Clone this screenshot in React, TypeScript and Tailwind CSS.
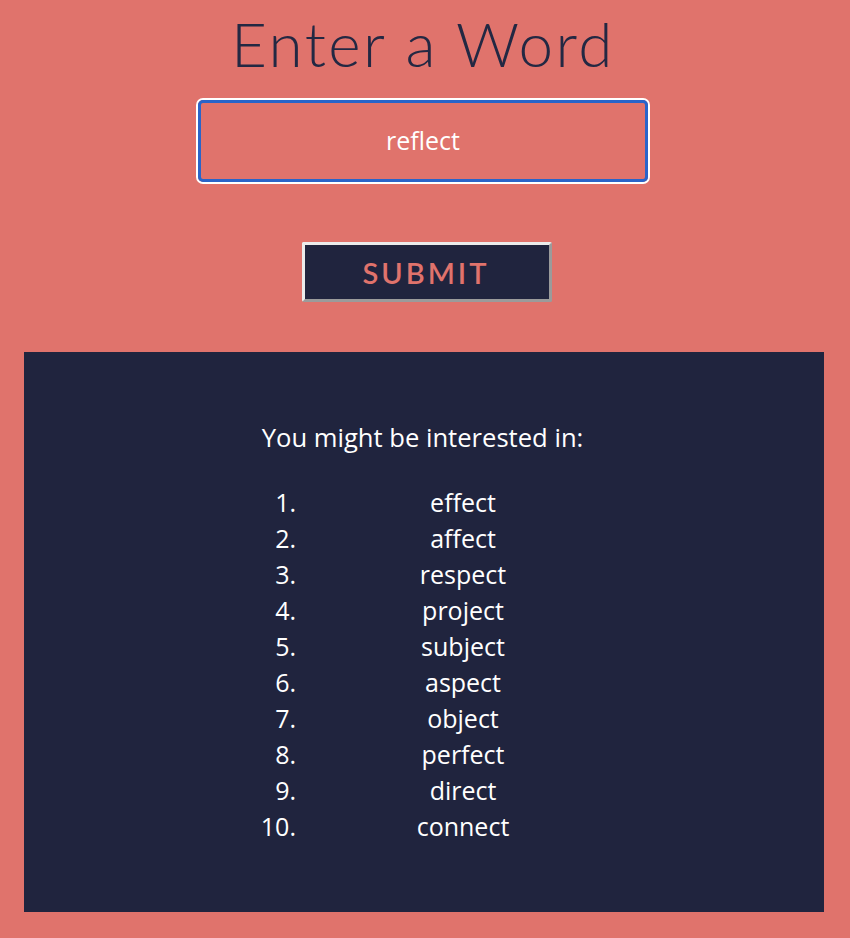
import React from "react";

const words = [
  "effect",
  "affect",
  "respect",
  "project",
  "subject",
  "aspect",
  "object",
  "perfect",
  "direct",
  "connect",
];

export default function App() {
  return (
    <div
      className="min-h-[938px] w-full bg-[#e0736c] flex flex-col items-start"
      style={{ fontFamily: '"Open Sans", "Noto Sans", sans-serif' }}
    >
      <h1
        className="self-center h-[86px] flex items-center justify-center text-[62px] font-light leading-none tracking-[2.5px] text-[#232843] -ml-[4px]"
        style={{ fontFamily: '"Lato", "Noto Sans", sans-serif' }}
      >
        Enter a Word
      </h1>
      <div className="ml-[198px] mt-[14px] w-[450px] h-[82px] rounded-[5px] border-[3px] border-[#2964c9] ring-2 ring-white flex items-center justify-center">
        <span className="text-[25px] font-medium text-white">reflect</span>
      </div>
      <button className="ml-[302px] mt-[60px] w-[250px] h-[60px] bg-[#20243e] border-[3px] border-t-[#ececec] border-l-[#ececec] border-r-[#9b9b9b] border-b-[#9b9b9b] rounded-[2px] flex items-center justify-center">
        <span
          className="text-[29px] font-semibold tracking-[3px] text-[#e0736c] leading-none -ml-[2px]"
          style={{ fontFamily: '"Lato", "Noto Sans", sans-serif' }}
        >
          SUBMIT
        </span>
      </button>
      <div className="ml-[24px] mt-[50px] w-[800px] h-[560px] bg-[#20243e] flex flex-col text-white font-medium">
        <div className="pt-[68px] h-[104px] text-[25.6px] leading-[36px] text-center -ml-[3px]">
          You might be interested in:
        </div>
        <ol className="mt-[29px] flex flex-col">
          {words.map((w, i) => (
            <li key={w} className="flex h-[36px] items-center text-[25px]">
              <span className="w-[272px] text-right">{i + 1}.</span>
              <span className="ml-[4px] w-[326px] text-center">{w}</span>
            </li>
          ))}
        </ol>
      </div>
    </div>
  );
}
